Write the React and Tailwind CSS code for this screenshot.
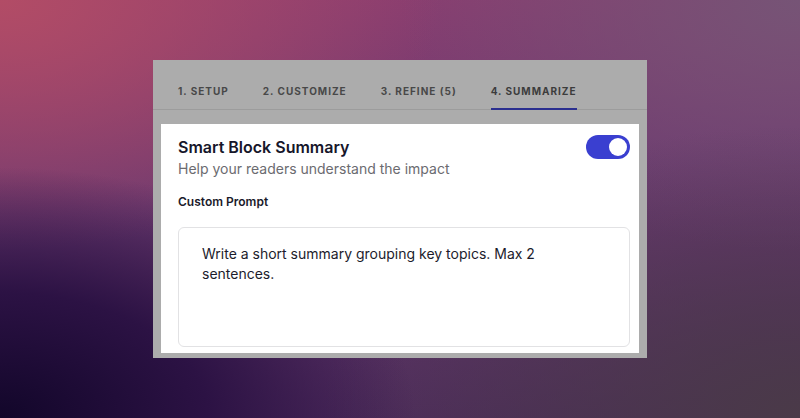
import { useState } from 'react'

const tabs = ['1. Setup', '2. Customize', '3. Refine (5)', '4. Summarize']

export default function App() {
  const [enabled, setEnabled] = useState(true)
  const active = 3

  return (
    <div
      className="w-full h-[418px] flex items-center justify-center bg-[radial-gradient(ellipse_65%_75%_at_0%_100%,#12062a_0%,#2c1244_40%,transparent_80%),radial-gradient(ellipse_55%_60%_at_0%_0%,#b24c66_0%,transparent_100%),radial-gradient(ellipse_60%_70%_at_100%_100%,#4a3a48_0%,transparent_100%),radial-gradient(ellipse_50%_60%_at_100%_0%,#765476_0%,transparent_100%),linear-gradient(175deg,#8e3e70_0%,#6c3a70_45%,#4a2a5a_100%)]"
      style={{ fontFamily: 'Inter, "Noto Sans", sans-serif' }}
    >
      <div className="w-[494px] h-[298px] bg-[#acacac] flex flex-col">
        {/* Tabs */}
        <div className="h-[50px] flex gap-[34px] pl-[25px] border-b border-[#9c9c9c] shrink-0">
          {tabs.map((t, i) => (
            <div
              key={t}
              className={
                'pt-[23px] text-[10px] leading-4 font-bold uppercase tracking-[0.1em] ' +
                (i === active
                  ? 'text-[#3c3c3c] border-b-2 border-[#2b2f8f] -mb-px'
                  : 'text-[#484848]')
              }
            >
              {t}
            </div>
          ))}
        </div>

        {/* Card */}
        <div className="mt-[14px] mx-[8px] h-[229px] bg-white pl-[17px] pr-[9px] pt-[11px] overflow-hidden">
          <div className="flex items-start justify-between">
            <div>
              <h2 className="text-[16px] leading-6 font-semibold text-[#16162a]">Smart Block Summary</h2>
              <p className="text-[14px] leading-5 text-[#6b6b70]">Help your readers understand the impact</p>
            </div>
            <button
              onClick={() => setEnabled(!enabled)}
              className={
                'w-[44px] h-[24px] rounded-full flex items-center px-[3px] ' +
                (enabled ? 'bg-[#3a3fd0] justify-end' : 'bg-gray-300 justify-start')
              }
            >
              <span className="w-[18px] h-[18px] rounded-full bg-white block" />
            </button>
          </div>

          <div className="mt-[15px] text-[12px] leading-4 font-semibold text-[#1a1a2a]">Custom Prompt</div>

          <div className="mt-[17px] h-[120px] border border-[#e2e2e4] rounded-md pl-[23px] pr-6 pt-[16px] text-[14px] leading-5 text-[#1c1c2c]">
            Write a short summary grouping key topics. Max 2 sentences.
          </div>
        </div>
      </div>
    </div>
  )
}
